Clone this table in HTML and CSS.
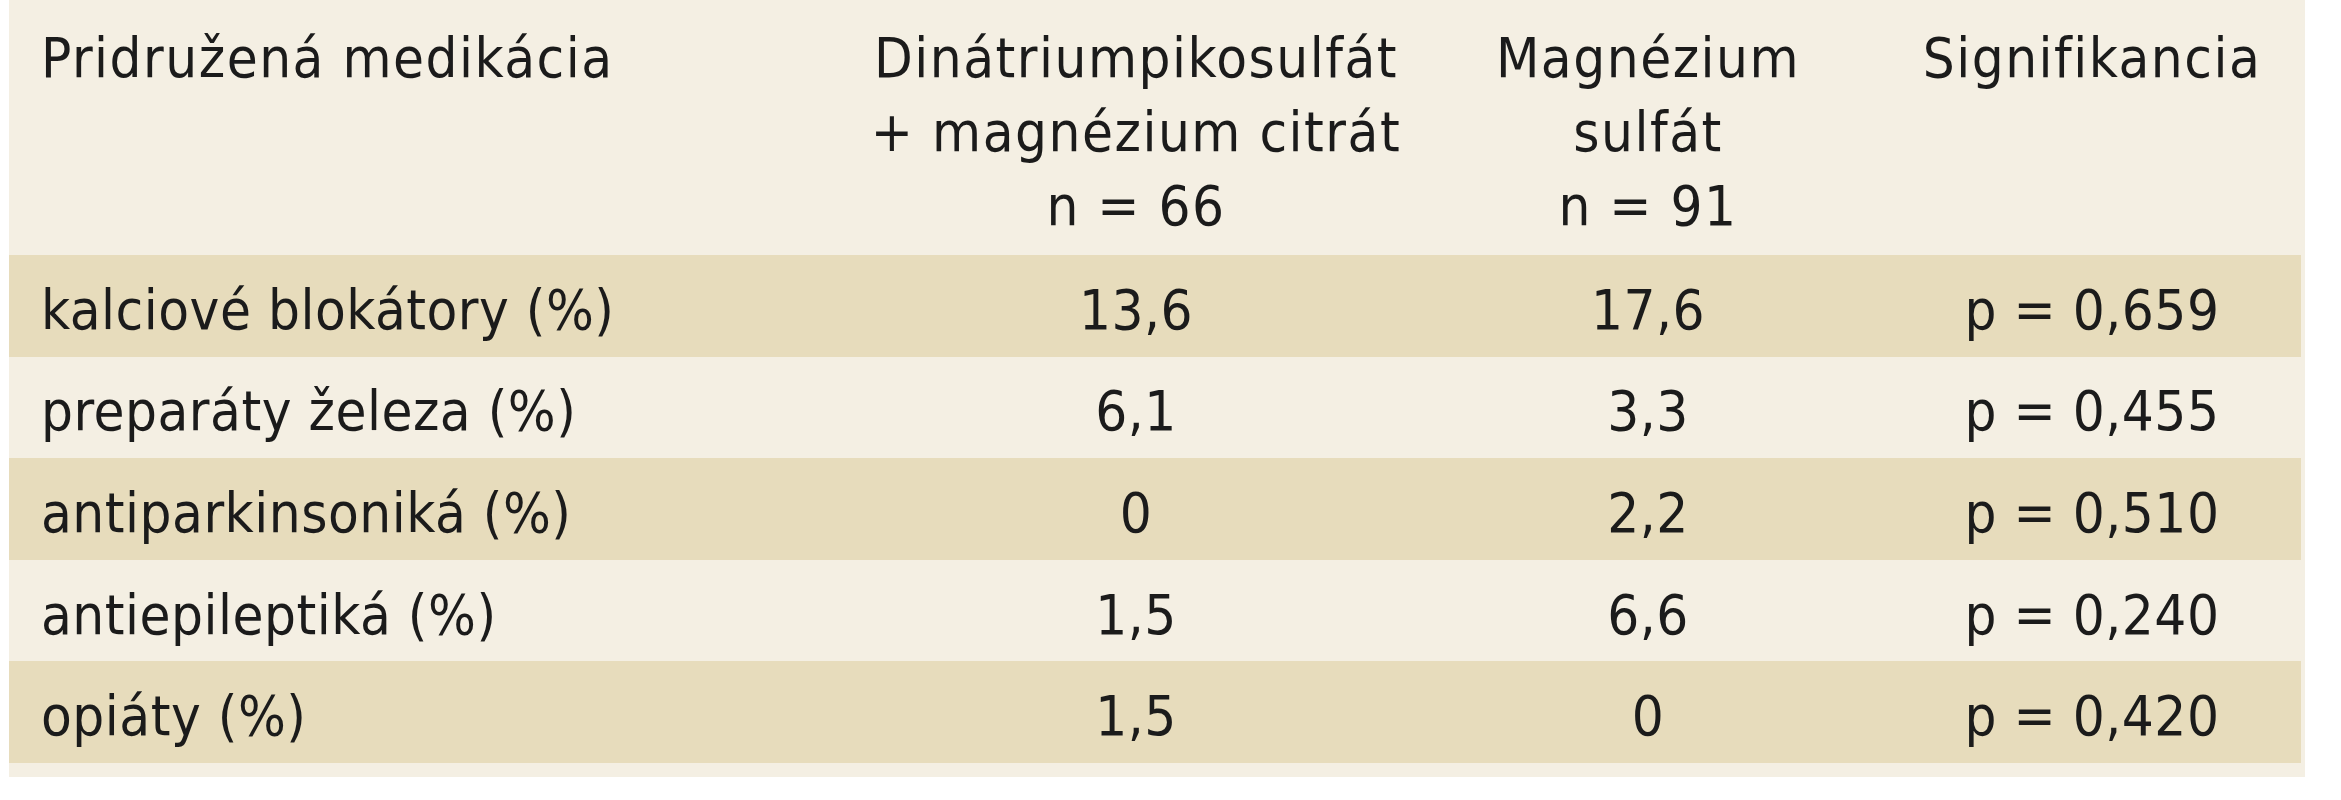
FILE: index.html
```html
<!DOCTYPE html>
<html lang="sk">
<head>
<meta charset="utf-8">
<title>Pridružená medikácia</title>
<link rel="stylesheet" href="styles.css">
</head>
<body>
<div class="wrap">
  <table class="med">
    <colgroup>
      <col class="c1"><col class="c2"><col class="c3"><col class="c4">
    </colgroup>
    <thead>
      <tr>
        <th class="left">Pridružená medikácia</th>
        <th>Dinátriumpikosulfát<br>+ magnézium citrát<br>n = 66</th>
        <th>Magnézium<br>sulfát<br>n = 91</th>
        <th>Signifikancia</th>
      </tr>
    </thead>
    <tbody>
      <tr><td class="left">kalciové blokátory (%)</td><td>13,6</td><td>17,6</td><td>p = 0,659</td></tr>
      <tr><td class="left">preparáty železa (%)</td><td>6,1</td><td>3,3</td><td>p = 0,455</td></tr>
      <tr><td class="left">antiparkinsoniká (%)</td><td>0</td><td>2,2</td><td>p = 0,510</td></tr>
      <tr><td class="left">antiepileptiká (%)</td><td>1,5</td><td>6,6</td><td>p = 0,240</td></tr>
      <tr><td class="left">opiáty (%)</td><td>1,5</td><td>0</td><td>p = 0,420</td></tr>
    </tbody>
  </table>
</div>
</body>
</html>
```
FILE: styles.css
```css
html, body {
  margin: 0;
  padding: 0;
  background: #ffffff;
}

body {
  font-family: "DejaVu Sans Condensed", "DejaVu Sans", sans-serif;
  font-stretch: condensed;
  font-size: 56px;
  color: #1b1b1b;
}

.wrap {
  margin-left: 9px;
  width: 2292px;
  padding: 0 4px 14px 0;
  background: #f4efe3;
}

.med {
  width: 2292px;
  border-collapse: collapse;
  table-layout: fixed;
}

.c1 { width: 850px; }
.c2 { width: 554px; }
.c3 { width: 470px; }
.c4 { width: 418px; }

.med th,
.med td {
  padding: 0;
  text-align: center;
  white-space: nowrap;
  font-weight: normal;
  line-height: 74px;
}

.med th {
  vertical-align: top;
  height: 255px;
  box-sizing: border-box;
  padding-top: 21px;
  letter-spacing: 1.5px;
}

.med td {
  height: 101.6px;
  box-sizing: border-box;
  padding-top: 8px;
  vertical-align: middle;
  letter-spacing: 0.5px;
}

.med .left {
  text-align: left;
  padding-left: 32px;
}

.med tbody tr:nth-child(odd) {
  background: #e7dcbc;
}

.med tbody tr:nth-child(even) {
  background: #f4efe3;
}
```
